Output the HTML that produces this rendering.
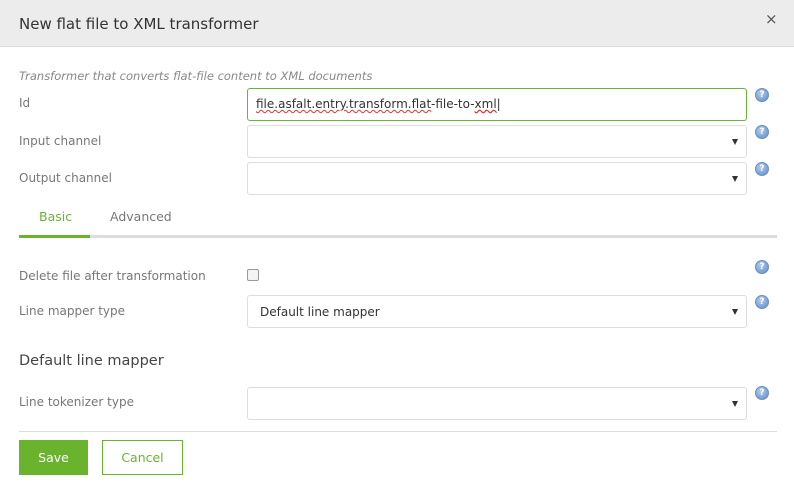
<!DOCTYPE html>
<html><head><style>
*{box-sizing:border-box;margin:0;padding:0}
body{width:794px;height:490px;background:#fff;font-family:"DejaVu Sans","Liberation Sans",sans-serif;position:relative;overflow:hidden;color:#777}
.a{position:absolute;white-space:nowrap}
.hdr{position:absolute;left:0;top:0;width:794px;height:47px;background:#ececec;border-bottom:1px solid #ddd}
.lbl{font-size:12px;color:#777}
.box{position:absolute;left:247px;width:500px;height:33px;border:1px solid #ddd;border-radius:3px;background:#fff}
.arr{position:absolute;right:8px;top:13px;width:0;height:0;border-left:3.5px solid transparent;border-right:3.5px solid transparent;border-top:6px solid #333}
.help{position:absolute;left:755px;width:14px;height:14px;border-radius:50%;background:radial-gradient(circle at 40% 35%,#b5cdee,#5b8ac6);border:1px solid #6b90c0;color:#fff;font-size:9px;font-weight:bold;text-align:center;line-height:12px}
</style></head><body>
<div class="hdr"></div>
<div class="a" style="left:19px;top:15px;font-size:15px;color:#333">New flat file to XML transformer</div>
<div class="a" style="left:765px;top:10px;font-size:15px;color:#555">×</div>
<div class="a lbl" style="left:19px;top:69px;font-style:italic;font-size:11.5px;color:#888">Transformer that converts flat-file content to XML documents</div>
<div class="a lbl" style="left:19px;top:96px">Id</div>
<div class="box" style="top:88px;height:33px;border-color:#6cb33e"><span class="a" style="left:8px;top:8px;font-size:12px;color:#333;text-decoration:underline wavy #d33;text-decoration-thickness:1px">file.asfalt.entry.transform.flat</span><span class="a" style="left:183px;top:8px;font-size:12px;color:#333">-file-to-<u style="text-decoration:underline wavy #d33">xml</u>|</span></div>
<div class="help" style="top:88px">?</div>
<div class="a lbl" style="left:19px;top:134px">Input channel</div>
<div class="box" style="top:125px"><div class="arr"></div></div>
<div class="help" style="top:125px">?</div>
<div class="a lbl" style="left:19px;top:171px">Output channel</div>
<div class="box" style="top:162px"><div class="arr"></div></div>
<div class="help" style="top:162px">?</div>
<div class="a" style="left:39px;top:209px;font-size:12.5px;color:#6ab42d">Basic</div>
<div class="a" style="left:110px;top:209px;font-size:12.5px;color:#777">Advanced</div>
<div class="a" style="left:19px;top:235px;width:758px;height:3px;background:#ddd"></div>
<div class="a" style="left:19px;top:235px;width:71px;height:3px;background:#6ab42d"></div>
<div class="a lbl" style="left:19px;top:269px">Delete file after transformation</div>
<div class="a" style="left:247px;top:269px;width:12px;height:12px;border:1px solid #999;border-radius:2px;background:#f4f4f4"></div>
<div class="help" style="top:260px">?</div>
<div class="a lbl" style="left:19px;top:304px">Line mapper type</div>
<div class="box" style="top:295px"><span class="a" style="left:12px;top:9px;font-size:12px;color:#333">Default line mapper</span><div class="arr"></div></div>
<div class="help" style="top:295px">?</div>
<div class="a" style="left:19px;top:353px;font-size:14.5px;color:#444">Default line mapper</div>
<div class="a lbl" style="left:19px;top:395px">Line tokenizer type</div>
<div class="box" style="top:387px"><div class="arr"></div></div>
<div class="help" style="top:386px">?</div>
<div class="a" style="left:19px;top:431px;width:758px;height:1px;background:#ddd"></div>
<div class="a" style="left:19px;top:440px;width:69px;height:35px;background:#6ab42d;color:#fff;font-size:12.5px;text-align:center;line-height:35px">Save</div>
<div class="a" style="left:102px;top:440px;width:81px;height:35px;border:1px solid #6ab42d;color:#6ab42d;font-size:12.5px;text-align:center;line-height:33px">Cancel</div>
</body></html>
